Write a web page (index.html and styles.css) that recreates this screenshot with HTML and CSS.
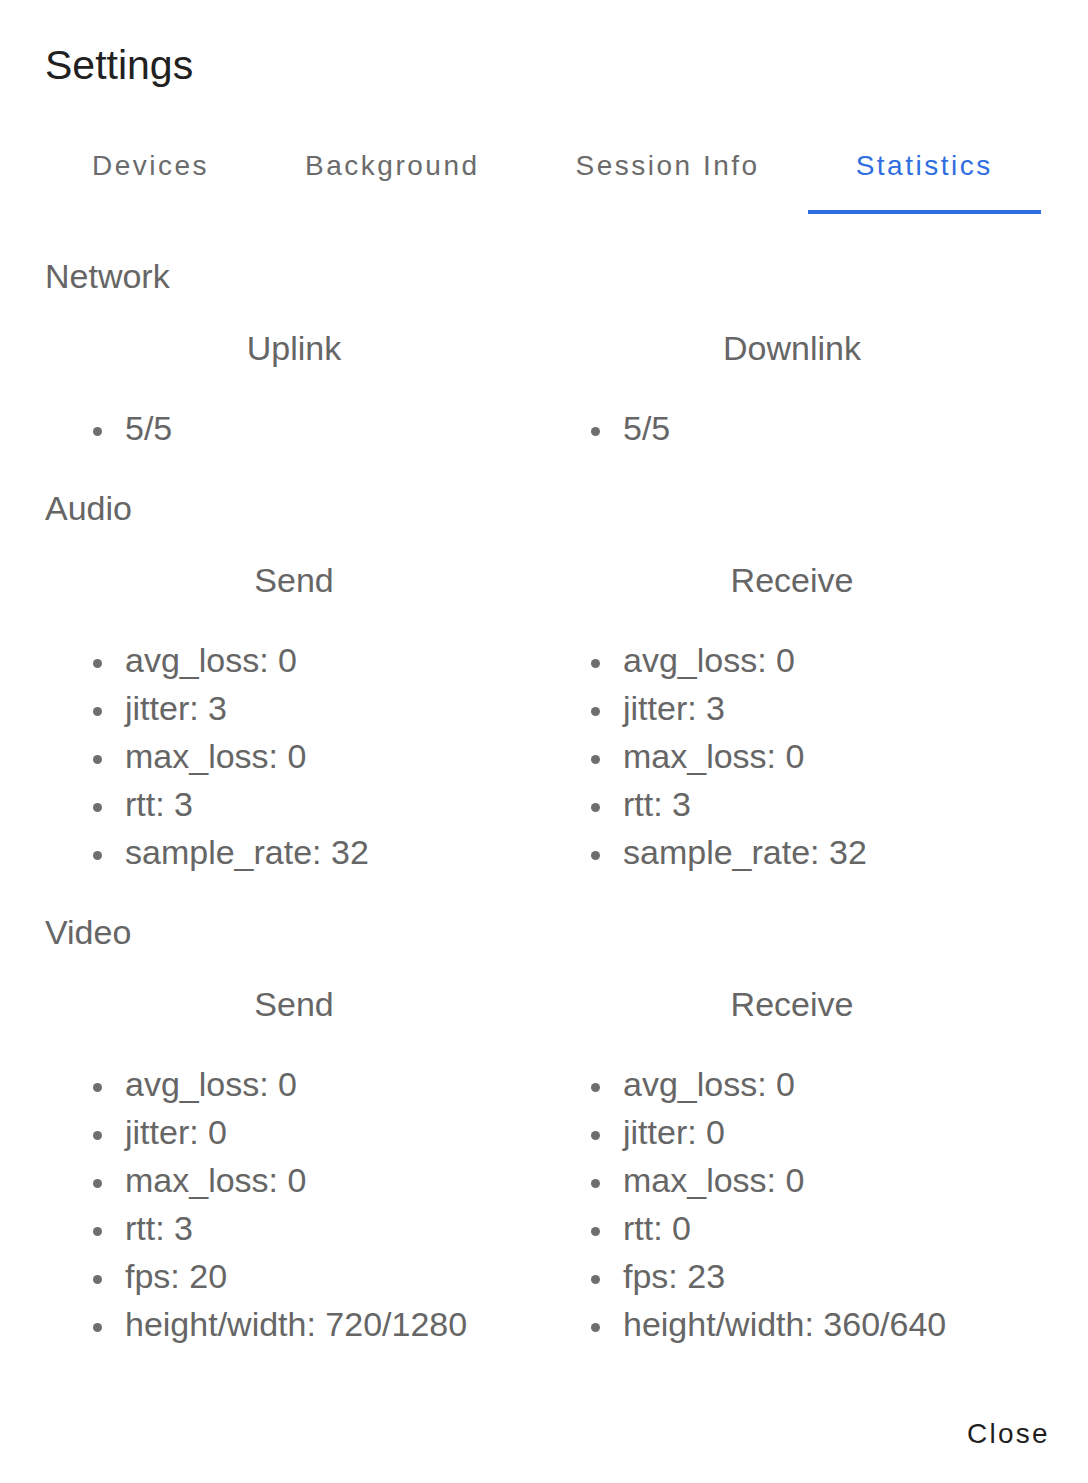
FILE: index.html
```html
<!DOCTYPE html>
<html lang="en">
<head>
<meta charset="utf-8">
<title>Settings</title>
<link rel="stylesheet" href="styles.css">
</head>
<body>
<div class="dialog">
  <h2 class="title">Settings</h2>
  <div class="tabs">
    <div class="tab">Devices</div>
    <div class="tab">Background</div>
    <div class="tab">Session Info</div>
    <div class="tab active">Statistics</div>
  </div>
  <div class="content">
    <section class="section">
      <h3 class="section-title">Network</h3>
      <div class="cols">
        <div class="col">
          <h4 class="col-title">Uplink</h4>
          <ul class="list"><li>5/5</li></ul>
        </div>
        <div class="col">
          <h4 class="col-title">Downlink</h4>
          <ul class="list"><li>5/5</li></ul>
        </div>
      </div>
    </section>
    <section class="section">
      <h3 class="section-title">Audio</h3>
      <div class="cols">
        <div class="col">
          <h4 class="col-title">Send</h4>
          <ul class="list">
            <li>avg_loss: 0</li>
            <li>jitter: 3</li>
            <li>max_loss: 0</li>
            <li>rtt: 3</li>
            <li>sample_rate: 32</li>
          </ul>
        </div>
        <div class="col">
          <h4 class="col-title">Receive</h4>
          <ul class="list">
            <li>avg_loss: 0</li>
            <li>jitter: 3</li>
            <li>max_loss: 0</li>
            <li>rtt: 3</li>
            <li>sample_rate: 32</li>
          </ul>
        </div>
      </div>
    </section>
    <section class="section">
      <h3 class="section-title">Video</h3>
      <div class="cols">
        <div class="col">
          <h4 class="col-title">Send</h4>
          <ul class="list">
            <li>avg_loss: 0</li>
            <li>jitter: 0</li>
            <li>max_loss: 0</li>
            <li>rtt: 3</li>
            <li>fps: 20</li>
            <li>height/width: 720/1280</li>
          </ul>
        </div>
        <div class="col">
          <h4 class="col-title">Receive</h4>
          <ul class="list">
            <li>avg_loss: 0</li>
            <li>jitter: 0</li>
            <li>max_loss: 0</li>
            <li>rtt: 0</li>
            <li>fps: 23</li>
            <li>height/width: 360/640</li>
          </ul>
        </div>
      </div>
    </section>
  </div>
  <div class="actions">
    <button class="btn" type="button">Close</button>
  </div>
</div>
</body>
</html>
```
FILE: styles.css
```css
html, body {
  margin: 0;
  padding: 0;
  background: #ffffff;
}

body {
  font-family: "Liberation Sans", Arial, Helvetica, sans-serif;
  color: #666666;
}

.dialog {
  width: 1088px;
  min-height: 1483px;
  box-sizing: border-box;
}

.title {
  margin: 0;
  padding: 33px 45px 0 45px;
  font-size: 41px;
  line-height: 64px;
  font-weight: 400;
  color: #212121;
}

.tabs {
  display: flex;
  margin-top: 21px;
  padding-left: 44px;
  height: 96px;
}

.tab {
  display: flex;
  align-items: center;
  padding: 0 48px;
  font-size: 28px;
  letter-spacing: 2.5px;
  color: #6b6b6b;
  white-space: nowrap;
}

.tab.active {
  color: #2f6ee0;
  box-shadow: inset 0 -4px 0 #2f6ee0;
}

.content {
  padding: 0 47px 0 45px;
  margin-top: 38px;
}

.section + .section {
  margin-top: 32px;
}

.section-title {
  margin: 0;
  font-size: 34px;
  line-height: 48px;
  font-weight: 400;
  color: #666666;
}

.cols {
  display: grid;
  grid-template-columns: 1fr 1fr;
  margin-top: 24px;
}

.col-title {
  margin: 0;
  font-size: 34px;
  line-height: 48px;
  font-weight: 400;
  text-align: center;
  color: #666666;
}

.list {
  margin: 32px 0 0 0;
  padding-left: 80px;
  list-style: none;
  font-size: 34px;
  line-height: 48px;
  color: #666666;
}

.list li::before {
  content: "";
  display: inline-block;
  width: 9px;
  height: 9px;
  border-radius: 50%;
  background: #6e6e6e;
  margin-left: -32px;
  margin-right: 23px;
  vertical-align: middle;
}

.actions {
  display: flex;
  justify-content: flex-end;
  margin-top: 62px;
  padding-right: 38px;
}

.btn {
  border: 0;
  background: transparent;
  padding: 0;
  font-family: "Liberation Sans", Arial, Helvetica, sans-serif;
  font-size: 28px;
  letter-spacing: 2.3px;
  line-height: 48px;
  color: #1f1f1f;
  cursor: pointer;
}
```
